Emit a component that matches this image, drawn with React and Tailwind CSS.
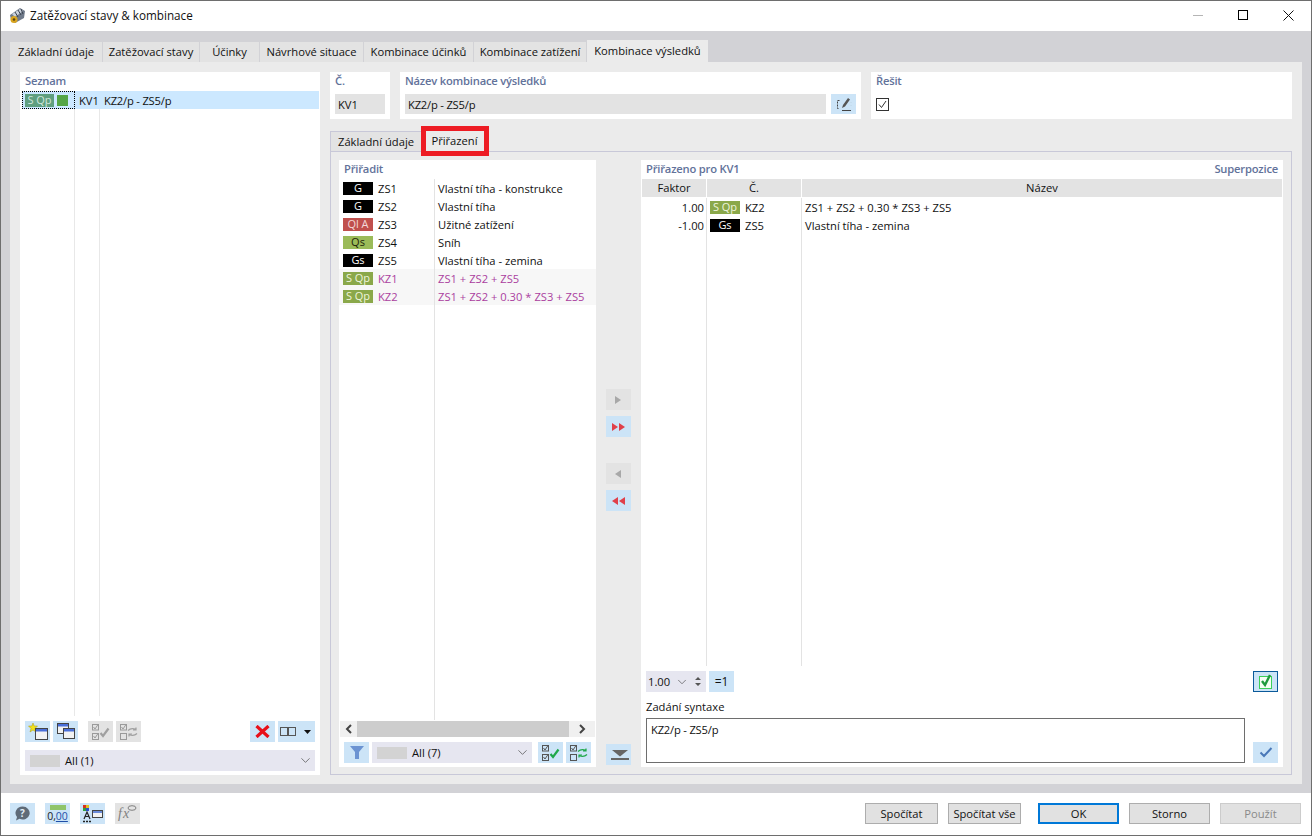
import { ChevronDown } from "lucide-react";

const labelCls = "text-[#62729a] font-semibold tracking-[-0.2px]";

const assignRows = [
  { badge: "G", color: "black", id: "ZS1", name: "Vlastní tíha - konstrukce" },
  { badge: "G", color: "black", id: "ZS2", name: "Vlastní tíha" },
  { badge: "Ql A", color: "red", id: "ZS3", name: "Užitné zatížení" },
  { badge: "Qs", color: "lime", id: "ZS4", name: "Sníh" },
  { badge: "Gs", color: "black", id: "ZS5", name: "Vlastní tíha - zemina" },
  { badge: "S Qp", color: "olive", id: "KZ1", name: "ZS1 + ZS2 + ZS5", combo: true },
  { badge: "S Qp", color: "olive", id: "KZ2", name: "ZS1 + ZS2 + 0.30 * ZS3 + ZS5", combo: true },
];

const assignedRows = [
  { factor: "1.00", badge: "S Qp", color: "olive", id: "KZ2", name: "ZS1 + ZS2 + 0.30 * ZS3 + ZS5" },
  { factor: "-1.00", badge: "Gs", color: "black", id: "ZS5", name: "Vlastní tíha - zemina" },
];

function Badge({ color, children }) {
  const colors = {
    black: "bg-black text-white",
    red: "bg-[#c0504d] text-[#f3d9d8]",
    lime: "bg-[#9bbb59] text-[#1d2408]",
    olive: "bg-[#8aa84a] text-[#eef5dc]",
  };
  return (
    <span className={`flex h-[13px] w-[30px] shrink-0 items-center justify-center text-[11px] ${colors[color]}`}>
      {children}
    </span>
  );
}

function IconBtn({ off, className = "", children }) {
  return (
    <div
      className={`flex h-[21px] w-[25px] shrink-0 items-center justify-center ${off ? "bg-[#e3e3e3]" : "bg-[#cce4f7]"} ${className}`}
    >
      {children}
    </div>
  );
}

function DialogBtn({ children, primary, off, className = "" }) {
  return (
    <div
      className={`flex h-[21px] items-center justify-center bg-[#e1e1e1] ${
        primary ? "border-2 border-[#0078d7]" : off ? "border border-[#cccccc] text-[#8a8a8a]" : "border border-[#adadad]"
      } ${className}`}
    >
      {children}
    </div>
  );
}

function Combo({ label, className = "" }) {
  return (
    <div className={`flex h-[21px] items-center bg-[#e6e6f0] pl-[5px] pr-[2px] ${className}`}>
      <span className="h-[12px] w-[30px] bg-[#d3d3d3]" />
      <span className="ml-[5px] flex-1">{label}</span>
      <ChevronDown size={15} strokeWidth={1} className="text-[#333333]" />
    </div>
  );
}

function Checks({ green, swap, dim }) {
  const mark = green ? "#1fa84a" : "#a0a0a0";
  const box = dim ? "#9a9a9a" : "#555555";
  return (
    <svg width="18" height="16" viewBox="0 0 18 16" fill="none">
      <rect x="0.5" y="0.5" width="6" height="5.500" stroke={box} />
      <path d="M1.500 3l1.500 2 3-4.500" stroke={box} />
      <rect x="0.5" y="9.5" width="6" height="6" stroke={box} />
      {!swap && <path d="M1.500 12l1.500 2 3-4.500" stroke={box} />}
      {swap ? (
        <>
          <path d="M8 6.500c2-2 5-2.500 8-1M16 3.500v2.500h-3" stroke={mark} strokeWidth="1.200" />
          <path d="M17 9.500c-2 2-5 2.500-8 1M9 12.500v-2.500h3" stroke={mark} strokeWidth="1.200" />
        </>
      ) : (
        <path d="M8.500 9l2.500 3 5.500-7.500" stroke={mark} strokeWidth="2.200" />
      )}
    </svg>
  );
}

function Tri({ left, double, fill }) {
  const one = left ? "M7 1v8L1 5z" : "M1 1v8l6-4z";
  return (
    <svg width={double ? 15 : 9} height="10" viewBox={double ? "0 0 15 10" : "0 0 9 10"} fill={fill}>
      <path d={one} />
      {double && <path d={left ? "M14 1v8L8 5z" : "M8 1v8l6-4z"} />}
    </svg>
  );
}

function Windows() {
  return (
    <svg width="12" height="11" viewBox="0 0 12 11" fill="#f2f2f2" stroke="#444">
      <rect x="0.5" y="0.5" width="11" height="10" />
      <rect x="1" y="1" width="10" height="2.5" fill="#4a6fd8" stroke="none" />
    </svg>
  );
}

function TitleIcon() {
  return (
    <svg width="17" height="17" viewBox="0 0 17 17">
      <path d="M1 8l10-7 5 3-1 7-9 5-4-3z" fill="#6f7a8a" />
      <path d="M3 7l8-5 3 2-8 6z" fill="#c9d1dc" />
      <path d="M6 5l3 5M9 3l3 5M12 2l2 5" stroke="#39424f" strokeWidth="1" />
      <circle cx="5" cy="12.500" r="3.500" fill="#d9a520" />
      <circle cx="5" cy="12.500" r="1.300" fill="#5a4510" />
    </svg>
  );
}

function Header({ label, children, className = "" }) {
  return (
    <div className={`h-[47px] bg-white px-[5px] pt-px ${className}`}>
      <div className={`h-[21px] ${labelCls}`}>{label}</div>
      {children}
    </div>
  );
}

export default function App() {
  return (
    <div className="relative flex h-[836px] w-[1312px] flex-col border border-[#6e6e6e] bg-white font-['Open_Sans','Noto_Sans',sans-serif] text-[11.2px] leading-[16px] text-[#111111]">
      {/* title bar */}
      <div className="flex h-[30px] shrink-0 items-center pb-[2px] pl-[8px] text-[11.7px]">
        <TitleIcon />
        <span className="ml-[4px] flex-1">Zatěžovací stavy &amp; kombinace</span>
        <div className="flex w-[45px] justify-center">
          <span className="h-px w-[10px] bg-[#b5b5b5]" />
        </div>
        <div className="flex w-[45px] justify-center">
          <span className="h-[10px] w-[10px] border border-black" />
        </div>
        <div className="flex w-[46px] justify-center">
          <svg width="11" height="11" viewBox="0 0 11 11" stroke="#111" fill="none">
            <path d="M0.5 0.5l10 10M10.5 0.5l-10 10" />
          </svg>
        </div>
      </div>

      {/* band */}
      <div className="flex min-h-0 flex-1 flex-col bg-[#d2d2d6] pl-[9px] pr-[9px] pt-[9px]">
        <div className="flex h-[22px] shrink-0 items-end gap-px">
          <div className="flex h-[20px] w-[92px] items-center justify-center bg-[#e3e3e3]">Základní údaje</div>
          <div className="flex h-[20px] w-[96px] items-center justify-center bg-[#e3e3e3]">Zatěžovací stavy</div>
          <div className="flex h-[20px] w-[59px] items-center justify-center bg-[#e3e3e3]">Účinky</div>
          <div className="flex h-[20px] w-[103px] items-center justify-center bg-[#e3e3e3]">Návrhové situace</div>
          <div className="flex h-[20px] w-[109px] items-center justify-center bg-[#e3e3e3]">Kombinace účinků</div>
          <div className="flex h-[20px] w-[112px] items-center justify-center bg-[#e3e3e3]">Kombinace zatížení</div>
          <div className="flex h-[22px] w-[121px] items-center justify-center bg-[#ebebeb]">Kombinace výsledků</div>
        </div>

        <div className="flex h-[722px] shrink-0 gap-[10px] bg-[#ebebeb] pb-[9px] pl-[10px] pr-[10px] pt-[10px]">
          {/* left list */}
          <div className="flex w-[300px] shrink-0 flex-col bg-white pb-[4px]">
            <div className={`h-[19px] pl-[5px] pt-[1px] ${labelCls}`}>Seznam</div>
            <div className="ml-[2px] mr-px flex min-h-0 flex-1 flex-col">
              <div className="flex h-[18px] items-center bg-[#cce8ff]">
                <div className="flex h-[18px] w-[53px] items-center gap-[3px] border border-dotted border-black pl-[2px]">
                  <span className="flex h-[13px] w-[29px] items-center justify-center bg-[#5f9f80] text-[11px] text-[#cfe6dc]">S Qp</span>
                  <span className="h-[11px] w-[11px] bg-[#55a546]" />
                </div>
                <div className="w-[25px] pl-[4px] pt-[2px]">KV1</div>
                <div className="pl-[4px] pt-[2px] tracking-[-0.2px]">KZ2/p - ZS5/p</div>
              </div>
              <div className="flex flex-1">
                <div className="w-[53px] border-r border-[#e8e8e8]" />
                <div className="w-[25px] border-r border-[#e8e8e8]" />
              </div>
            </div>
            <div className="mt-[5px] flex px-[5px]">
              <IconBtn>
                <svg width="20" height="17" viewBox="0 0 20 17">
                  <path d="M5 0l1.200 3L9.500 3 7 5.500l1 3.500-3-2-3 2 1-3.500L0.500 3h3.300z" fill="#f0e020" stroke="#a89a10" strokeWidth="0.5" />
                  <rect x="7.500" y="5.500" width="12" height="11" fill="#f2f2f2" stroke="#444" />
                  <rect x="8" y="6" width="11" height="2.500" fill="#4a6fd8" />
                </svg>
              </IconBtn>
              <IconBtn className="ml-[3px]">
                <div className="relative h-[17px] w-[18px]">
                  <div className="absolute left-0 top-0"><Windows /></div>
                  <div className="absolute left-[6px] top-[5px]"><Windows /></div>
                </div>
              </IconBtn>
              <IconBtn off className="ml-[10px]"><Checks dim /></IconBtn>
              <IconBtn off className="ml-[3px]"><Checks swap dim /></IconBtn>
              <IconBtn className="ml-auto">
                <svg width="15" height="13" viewBox="0 0 15 13" stroke="#e8101a" strokeWidth="3.200">
                  <path d="M1.500 1l12 11M13.500 1l-12 11" />
                </svg>
              </IconBtn>
              <div className="ml-[3px] flex h-[21px] w-[37px] items-center bg-[#cce4f7] pl-[2px]">
                <svg width="16" height="10" viewBox="0 0 16 10" fill="none" stroke="#555">
                  <rect x="0.500" y="0.500" width="7" height="8" />
                  <rect x="8.500" y="0.500" width="7" height="8" />
                </svg>
                <svg className="ml-[8px]" width="7" height="4" viewBox="0 0 7 4" fill="#111">
                  <path d="M0 0h7L3.500 4z" />
                </svg>
              </div>
            </div>
            <Combo label="All (1)" className="mx-[5px] mt-[8px]" />
          </div>

          {/* right part */}
          <div className="flex min-w-0 flex-1 flex-col">
            <div className="flex shrink-0 gap-[10px]">
              <Header label="Č." className="w-[60px]">
                <div className="flex h-[20px] w-[50px] items-center bg-[#e3e3e3] pl-[3px] pt-[2px]">KV1</div>
              </Header>
              <Header label="Název kombinace výsledků" className="w-[461px]">
                <div className="flex gap-[5px]">
                  <div className="flex h-[20px] w-[421px] items-center bg-[#e3e3e3] pl-[3px] pt-[2px] tracking-[-0.2px]">KZ2/p - ZS5/p</div>
                  <div className="flex h-[20px] w-[25px] items-center justify-center bg-[#cce4f7]">
                    <svg width="16" height="15" viewBox="0 0 16 15" fill="none" stroke="#444">
                      <path d="M3.500 3.500H1.500v8h2" strokeDasharray="2 1" />
                      <path d="M6 13.500h9" />
                      <path d="M6 11l1-3 5-7 2 1.500-5 7z" fill="#555" stroke="none" />
                      <path d="M15 5l0 .1M15 8l0 .1" />
                    </svg>
                  </div>
                </div>
              </Header>
              <Header label="Řešit" className="flex-1">
                <div className="flex h-[20px] items-center">
                  <svg width="13" height="13" viewBox="0 0 13 13" fill="none" stroke="#333">
                    <rect x="0.500" y="0.500" width="12" height="12" />
                    <path d="M3 6.500l2.500 3L10 3" />
                  </svg>
                </div>
              </Header>
            </div>

            <div className="mt-[12px] flex h-[20px] shrink-0 items-end">
              <div className="flex h-[20px] w-[91px] items-center justify-center border-l border-t border-[#c8c8d8] bg-[#e3e3e3]">
                Základní údaje
              </div>
              <div className="flex h-[20px] w-[67px] items-center justify-center bg-[#ebebeb]">Přiřazení</div>
            </div>

            <div className="flex min-h-0 flex-1 border border-[#c8c8d8] pb-[7px] pl-[8px] pr-[8px] pt-[8px]">
              {/* assign panel */}
              <div className="flex w-[257px] shrink-0 flex-col bg-white pb-[4px]">
                <div className={`h-[19px] pl-[5px] pt-px ${labelCls}`}>Přiřadit</div>
                {assignRows.map((row) => (
                  <div
                    key={row.id}
                    className={`flex h-[18px] shrink-0 items-center pl-[4px] ${row.combo ? "bg-[#f7f7f7] text-[#ab3f9f]" : ""}`}
                  >
                    <Badge color={row.color}>{row.badge}</Badge>
                    <span className="flex h-[18px] w-[62px] items-center border-r border-[#e3e3e3] pl-[5px] pt-[2px]">{row.id}</span>
                    <span className="ml-[3px] whitespace-nowrap pt-[2px]">{row.name}</span>
                  </div>
                ))}
                <div className="flex flex-1">
                  <div className="w-[96px] border-r border-[#e3e3e3]" />
                </div>
                <div className="ml-px mr-px mt-px flex h-[16px] shrink-0 items-center bg-[#f0f0f0]">
                  <div className="flex w-[17px] justify-center">
                    <svg width="7" height="10" viewBox="0 0 7 10" fill="none" stroke="#444" strokeWidth="2"><path d="M6 1L2 5l4 4" /></svg>
                  </div>
                  <div className="h-[16px] w-[212px] bg-[#cdcdcd]" />
                  <div className="flex flex-1 justify-center">
                    <svg width="7" height="10" viewBox="0 0 7 10" fill="none" stroke="#444" strokeWidth="2"><path d="M1 1l4 4-4 4" /></svg>
                  </div>
                </div>
                <div className="mt-[5px] flex pl-[5px]">
                  <IconBtn>
                    <svg width="14" height="13" viewBox="0 0 14 13" fill="#6b93d2"><path d="M0 0h14L9 6v7H5V6z" /></svg>
                  </IconBtn>
                  <Combo label="All (7)" className="ml-[3px] w-[160px]" />
                  <IconBtn className="ml-[6px]"><Checks green /></IconBtn>
                  <IconBtn className="ml-[3px]"><Checks green swap /></IconBtn>
                </div>
              </div>

              {/* transfer buttons */}
              <div className="ml-[10px] flex w-[25px] shrink-0 flex-col pb-[2px] pt-[229px]">
                <IconBtn off><Tri fill="#a8a8a8" /></IconBtn>
                <IconBtn className="mt-[6px]"><Tri double fill="#e0404a" /></IconBtn>
                <IconBtn off className="mt-[26px]"><Tri left fill="#a8a8a8" /></IconBtn>
                <IconBtn className="mt-[6px]"><Tri left double fill="#e0404a" /></IconBtn>
                <IconBtn className="mt-auto pl-[2px]">
                  <svg width="18" height="10" viewBox="0 0 18 10" fill="#666666"><path d="M1 0h16l-8 6.500z" /><rect x="0" y="8" width="18" height="2" /></svg>
                </IconBtn>
              </div>

              {/* assigned panel */}
              <div className="ml-[10px] flex w-[642px] shrink-0 flex-col bg-white pb-[4px]">
                <div className={`flex h-[19px] shrink-0 justify-between pl-[5px] pr-[5px] pt-px ${labelCls}`}>
                  <span>Přiřazeno pro KV1</span>
                  <span>Superpozice</span>
                </div>
                <div className="ml-px mr-px flex h-[18px] shrink-0 bg-[#e3e3e3]">
                  <div className="flex w-[65px] items-center justify-center border-r border-white">Faktor</div>
                  <div className="flex w-[95px] items-center justify-center border-r border-white">Č.</div>
                  <div className="flex flex-1 items-center justify-center">Název</div>
                </div>
                <div className="ml-px mr-px flex min-h-0 flex-1 flex-col pt-px">
                  {assignedRows.map((row) => (
                    <div key={row.id} className="flex h-[18px] shrink-0 items-center">
                      <span className="flex h-[18px] w-[65px] items-center justify-end border-r border-[#e3e3e3] pr-[2px] pt-[2px]">{row.factor}</span>
                      <span className="flex h-[18px] w-[95px] items-center border-r border-[#e3e3e3] pl-[3px]">
                        <Badge color={row.color}>{row.badge}</Badge>
                        <span className="ml-[5px] pt-[2px]">{row.id}</span>
                      </span>
                      <span className="pl-[3px] pt-[2px]">{row.name}</span>
                    </div>
                  ))}
                  <div className="flex flex-1">
                    <div className="w-[65px] border-r border-[#e3e3e3]" />
                    <div className="w-[95px] border-r border-[#e3e3e3]" />
                  </div>
                </div>
                <div className="mt-[5px] flex shrink-0 pl-[5px] pr-[5px]">
                  <div className="flex h-[21px] w-[60px] items-center bg-[#e6e6f0] pl-[2px]">
                    <span>1.00</span>
                    <ChevronDown size={14} strokeWidth={1} className="ml-[5px] text-[#333333]" />
                    <svg className="ml-[6px]" width="6" height="11" viewBox="0 0 6 11" fill="#555">
                      <path d="M3 1L6 4H0zM3 10L0 7h6z" />
                    </svg>
                  </div>
                  <div className="ml-[3px] flex h-[21px] w-[25px] items-center justify-center bg-[#cce4f7] text-[12px]">=1</div>
                  <div className="ml-auto flex h-[21px] w-[25px] items-center justify-center border border-[#0b5a9a] bg-[#cce4f7]">
                    <svg width="15" height="15" viewBox="0 0 15 15" fill="none">
                      <rect x="1.500" y="2.500" width="12" height="12" fill="#f4fff4" stroke="#3ccf5a" />
                      <path d="M4 7l3 4 5-10" stroke="#1e9a3e" strokeWidth="2.400" />
                    </svg>
                  </div>
                </div>
                <div className="mt-[6px] h-[20px] shrink-0 pl-[5px] leading-[18px]">Zadání syntaxe</div>
                <div className="flex shrink-0 items-end pl-[5px] pr-[5px]">
                  <div className="h-[45px] w-[599px] border border-[#6e6e6e] pl-[4px] pt-[3px] tracking-[-0.2px]">KZ2/p - ZS5/p</div>
                  <div className="ml-auto flex h-[21px] w-[25px] items-center justify-center bg-[#cce4f7]">
                    <svg width="14" height="11" viewBox="0 0 14 11" fill="none" stroke="#4a78b8" strokeWidth="2">
                      <path d="M1.500 5.500l3.500 3.500 7.500-8" />
                    </svg>
                  </div>
                </div>
              </div>
            </div>
          </div>
        </div>
      </div>

      {/* footer */}
      <div className="flex h-[42px] shrink-0 items-start pl-[9px] pr-[10px] pt-[10px]">
        <IconBtn>
          <svg width="15" height="15" viewBox="0 0 15 15">
            <path d="M7.500 0.500a7 6.500 0 1 1-3 12.300L1 14.500l1-3.500a7 6.500 0 0 1 5.500-10.500z" fill="#5f6b78" />
            <text x="7.500" y="10.500" textAnchor="middle" fontSize="10" fontWeight="700" fill="#e3eef8">?</text>
          </svg>
        </IconBtn>
        <div className="ml-[10px] flex h-[21px] w-[25px] flex-col items-center bg-[#cce4f7] pt-[2px]">
          <span className="h-[5px] w-[16px] bg-[#8fc46a]" />
          <span className="text-[10.500px] leading-[12px] text-[#222222]">
            0,<span className="text-[#1f4fa8] underline">00</span>
          </span>
        </div>
        <IconBtn className="ml-[10px]">
          <svg width="20" height="18" viewBox="0 0 20 18">
            <rect x="0" y="0" width="3" height="3" fill="#d83020" />
            <rect x="3" y="0" width="3" height="3" fill="#e0c020" />
            <rect x="0" y="3" width="3" height="3" fill="#30a040" />
            <rect x="3" y="3" width="3" height="3" fill="#3050d0" />
            <path d="M1 14l3-7 3 7M2.200 11.500h3.600" stroke="#222" strokeWidth="1.200" fill="none" />
            <path d="M0 16.500h2M3 16.500h2M6 16.500h2" stroke="#222" strokeWidth="1.500" />
            <rect x="9.500" y="5.500" width="10" height="7" fill="#f2f2f2" stroke="#444" />
            <rect x="10" y="6" width="9" height="2" fill="#6a8ad8" />
          </svg>
        </IconBtn>
        <IconBtn off className="ml-[10px]">
          <div className="relative h-[17px] w-[19px] font-['Liberation_Serif',serif] text-[14px] italic leading-[18px] text-[#808080]">
            f<span className="ml-px">x</span>
            <svg className="absolute right-0 top-0" width="10" height="6" viewBox="0 0 10 6" fill="none" stroke="#808080">
              <ellipse cx="5" cy="3" rx="4" ry="2.300" />
            </svg>
          </div>
        </IconBtn>
        <div className="flex-1" />
        <DialogBtn className="w-[73px]">Spočítat</DialogBtn>
        <DialogBtn className="ml-[10px] w-[73px]">Spočítat vše</DialogBtn>
        <DialogBtn primary className="ml-[17px] w-[81px]">OK</DialogBtn>
        <DialogBtn className="ml-[10px] w-[81px]">Storno</DialogBtn>
        <DialogBtn off className="ml-[10px] w-[81px]">Použít</DialogBtn>
      </div>

      {/* red highlight over the tab */}
      <div className="absolute left-[420px] top-[125px] h-[30px] w-[68px] border-[5px] border-[#ed1c24]" />
    </div>
  );
}
